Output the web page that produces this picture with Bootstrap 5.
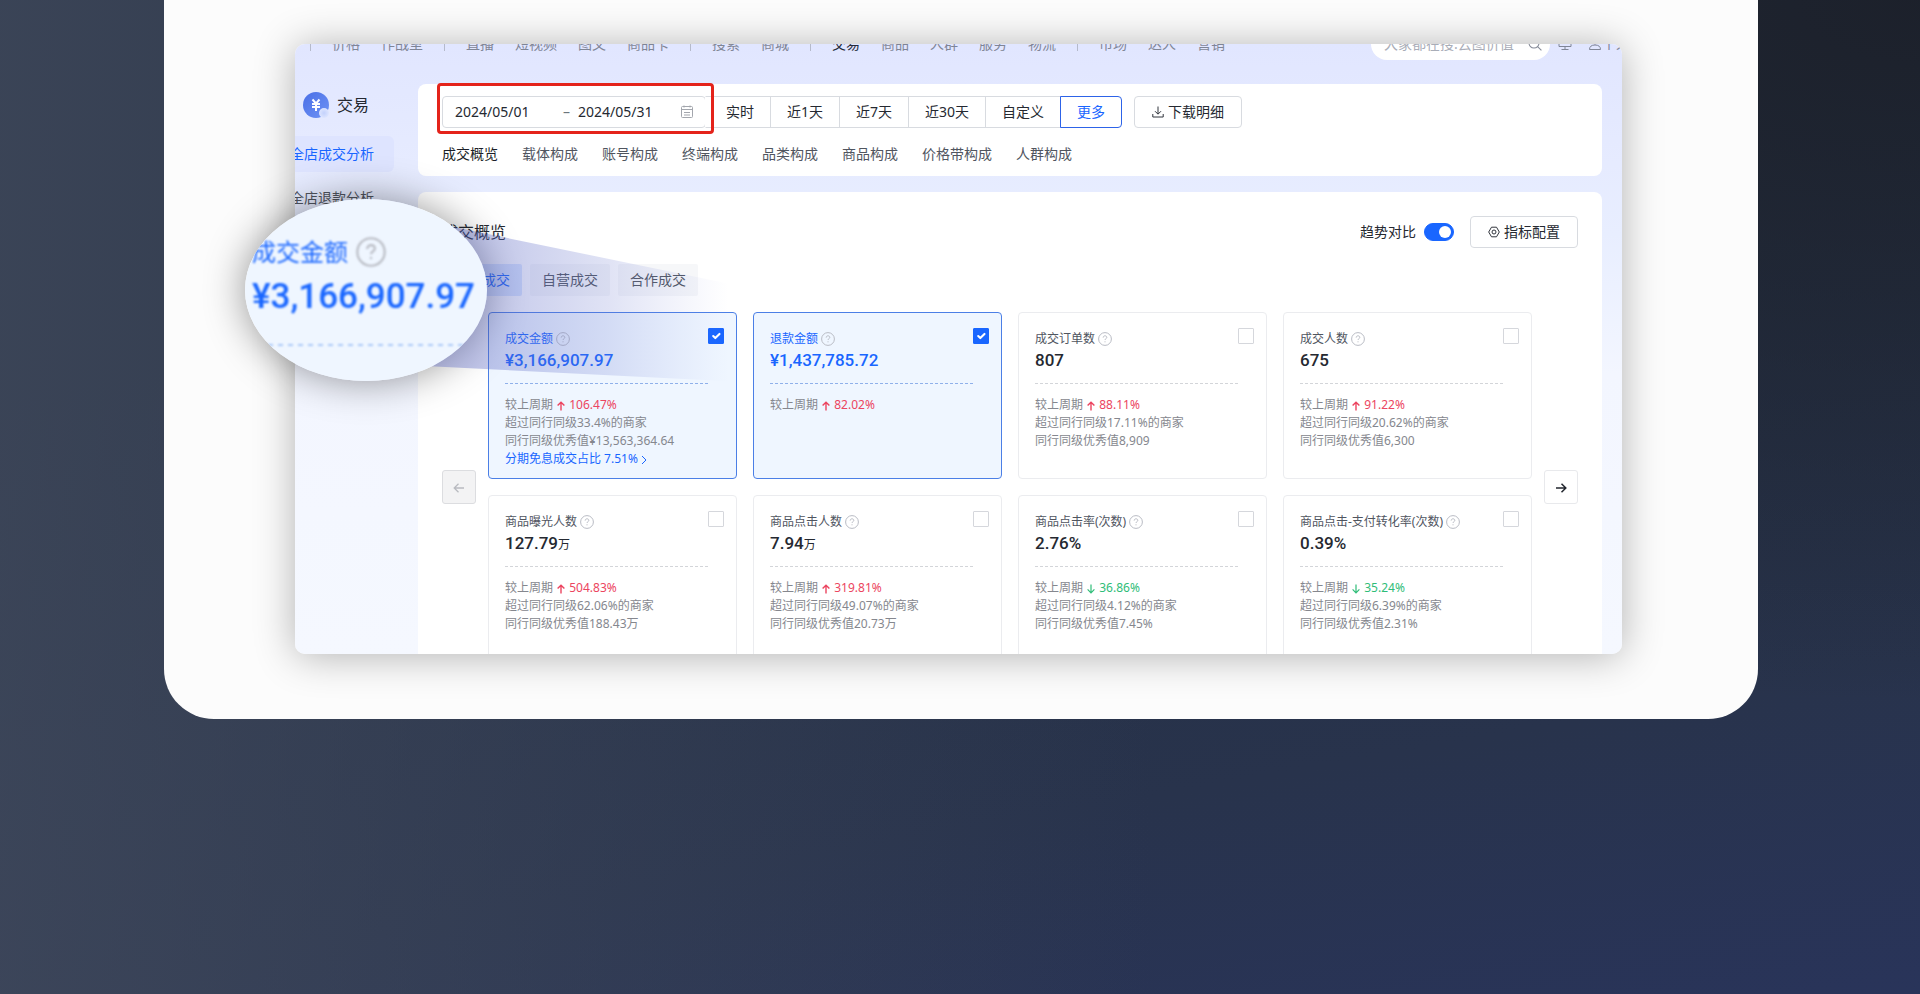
<!DOCTYPE html>
<html lang="zh-CN">
<head>
<meta charset="utf-8">
<meta name="viewport" content="width=device-width, initial-scale=1">
<title>交易 - 成交概览</title>
<link href="https://cdn.jsdelivr.net/npm/bootstrap@5.3.0/dist/css/bootstrap.min.css" rel="stylesheet">
<style>
  :root { --brand: #1966ff; --ink: #252931; --ink-2: #50555f; --ink-3: #85878e; }
  body {
    font: 14px/22px "Noto Sans", "Noto Sans CJK SC", sans-serif;
    color: var(--ink);
    min-height: 100vh;
    padding: 0 162px 0 164px;
    background:
      radial-gradient(ellipse at 100% 0, rgba(28,32,42,.95), rgba(28,32,42,0) 50%),
      linear-gradient(90deg, rgba(66,75,94,.75), rgba(66,75,94,0) 60%),
      linear-gradient(170deg, #232e40 30%, #28334c 75%, #29345a);
  }
  a { text-decoration: none; color: inherit; }
  .slide { background: #fcfcfc; border-radius: 0 0 50px 50px; padding: 44px 136px 65px 131px; }
  .screen {
    border-radius: 10px; overflow: hidden;
    background: linear-gradient(180deg, #e1e6ff 0, #e6ebff 120px, #e8eeff 190px, #f3f6ff 330px, #f5f8ff);
    box-shadow: 0 2px 40px rgba(0,0,0,.3);
  }
  .topnav { height: 32px; margin-top: -16px; padding-left: 15px; gap: 21px; color: #7f8596; }
  .topnav a { white-space: nowrap; }
  .topnav .sep { width: 1px; height: 14px; background: #b5bacb; }
  .topnav .current { color: #252b3a; }
  .search { width: 179px; height: 32px; background: #fff; padding: 0 8px 0 13px; }
  .search input { width: 140px; font-size: 14px; color: #a9adb8; }
  .search input::placeholder { color: #a9adb8; opacity: 1; }
  .account { margin-right: -8px; }
  .side { width: 123px; padding-top: 8px; }
  .side h1 { font-size: 16px; line-height: 24px; margin: 0; font-weight: 400; }
  .side-links { margin: 18px 24px 0 -5px; gap: 8px; }
  .side-links a { height: 36px; line-height: 36px; white-space: nowrap; color: var(--ink-2); border-radius: 6px; }
  .side-links a.on { color: var(--brand); background: #dee4ff; }
  .content { min-width: 0; }
  .panel { background: #fff; border-radius: 8px; }
  .filters { padding: 12px 24px 11px; }
  .ctl { height: 32px; border: 1px solid #d8dbe0; background: #fff; color: var(--ink); padding: 0; font-size: 14px; line-height: 20px; border-radius: 4px; white-space: nowrap; }
  .action { min-width: 108px; padding: 0 16px; }
  .download { margin-left: 12px; }
  .date { width: 264px; padding: 0 11px 0 12px; position: relative; }
  .date input { width: 78px; color: var(--ink); font: inherit; }
  .marker { position: absolute; inset: -14px -9px -7px -6px; border: 3px solid #e4231b; border-radius: 4px; pointer-events: none; z-index: 2; }
  .seg .ctl { padding: 0 16px; border-radius: 0; margin-left: -1px; }
  .seg .ctl:first-child { padding-left: 20px; border-left-color: transparent; }
  .seg .ctl.on { color: var(--brand); border-color: #2d63e8; border-radius: 0 4px 4px 0; z-index: 1; }
  .tabs { gap: 24px; margin-top: 15px; color: var(--ink-2); }
  .tabs a { white-space: nowrap; }
  .tabs .on { color: #1b1f28; }
  .overview { padding: 24px 24px 0; margin: 16px 0 -8px; border-radius: 8px 8px 0 0; }
  .overview h2 { font-size: 16px; line-height: 24px; margin: 0; font-weight: 400; }
  .form-switch { min-height: 0; }
  .form-switch .form-check-input { width: 30px; height: 18px; margin: 0; }
  .form-check-input:checked { background-color: var(--brand); border-color: var(--brand); }
  .kind { width: 80px; height: 32px; border: 0; padding: 0; font-size: 14px; line-height: 20px; border-radius: 2px; background: #f6f7f9; color: var(--ink-2); }
  .kind.on { background: #dce8ff; color: var(--brand); }
  .pager { gap: 12px; }
  .arrow { width: 34px; height: 34px; flex: none; border: 1px solid #e8e9ec; background: #fff; border-radius: 3px; padding: 0; color: #22262e; }
  .arrow:disabled { background: #f3f3f4; border-color: #dcdde0; color: #b9bbc0; }
  .metrics { display: grid; grid-template-columns: repeat(4, minmax(0, 1fr)); grid-auto-rows: 167px; gap: 16px; }
  .metric { border: 1px solid #ebecef; border-radius: 4px; padding: 17px 12px 0 16px; font-size: 12px; line-height: 18px; color: var(--ink-3); white-space: nowrap; }
  .metric.on { background: #eff6ff; border-color: #4b7fe6; }
  .metric label { color: var(--ink-2); line-height: 18px; }
  .metric .q { width: 14px; height: 14px; margin: 2px 0 0 3px; }
  .metric .num { font: 500 17px/24px Roboto, "Noto Sans CJK SC", sans-serif; height: 24px; color: var(--ink); }
  .metric .num small { font-size: 12px; font-weight: 400; line-height: 20px; }
  .metric.on label, .metric.on .num, .more { color: var(--brand); }
  .metric .form-check-input { width: 16px; height: 16px; margin: -2px 0 0; border-radius: 1px; border-color: #d5d7dc; }
  .metric .form-check-input:checked { border-color: var(--brand); }
  .rule { border-top: 1px dashed #d3d5d9; margin: 11px 16px 12px 0; }
  .metric.on .rule { border-color: #8fb0ea; }
  .up { color: #ec4560; } .down { color: #2fbd78; }
  .beam { position: absolute; left: 110px; top: 170px; width: 340px; height: 170px; pointer-events: none; }
  .lens, .lens-shade { position: absolute; left: -50px; top: 155px; width: 242px; height: 182px; border-radius: 50%; }
  .lens { overflow: hidden; background: #eff6ff; padding: 38px 0 0 7px; color: var(--brand); }
  .lens-shade { box-shadow: 0 0 40px rgba(0,0,0,.42); }
  .lens-body { filter: blur(1px); white-space: nowrap; }
  .lens-name { font-size: 24px; line-height: 30px; }
  .lens-num { font: 500 35px/44px Roboto, sans-serif; margin-top: 8px; }
</style>
</head>
<body>
<svg class="d-none" aria-hidden="true">
  <symbol id="q" viewBox="0 0 14 14"><circle cx="7" cy="7" r="6.4" fill="none" stroke="#b9bcc4"/><path d="M5.2 5.6c0-1.1.8-1.8 1.8-1.8s1.8.6 1.8 1.6c0 1.3-1.8 1.3-1.8 2.6M7 9.3v1" fill="none" stroke="#b9bcc4"/></symbol>
  <symbol id="up" viewBox="0 0 10 10"><path d="M5 9.4V1.200M1.600 4.600L5 1.200l3.400 3.400" fill="none" stroke="currentColor" stroke-width="1.400"/></symbol>
  <symbol id="down" viewBox="0 0 10 10"><path d="M5 .6v8.200M1.600 5.400L5 8.800l3.400-3.400" fill="none" stroke="currentColor" stroke-width="1.200"/></symbol>
</svg>

<main class="slide">
  <div class="position-relative">
    <div class="screen">
      <nav class="topnav d-flex align-items-center">
        <span class="sep"></span><a href="#">价格</a><a href="#">作战室</a>
        <span class="sep"></span><a href="#">直播</a><a href="#">短视频</a><a href="#">图文</a><a href="#">商品卡</a>
        <span class="sep"></span><a href="#">搜索</a><a href="#">商城</a>
        <span class="sep"></span><a href="#" class="current">交易</a><a href="#">商品</a><a href="#">人群</a><a href="#">服务</a><a href="#">物流</a>
        <span class="sep"></span><a href="#">市场</a><a href="#">达人</a><a href="#">营销</a>
        <div class="d-flex align-items-center ms-auto">
          <div class="search d-flex align-items-center justify-content-between rounded-pill">
            <input type="text" class="border-0 bg-transparent p-0" placeholder="大家都在搜:云图价值" aria-label="搜索">
            <svg width="14" height="14" viewBox="0 0 14 14" fill="none" stroke="#858a98" stroke-width="1.1"><circle cx="6" cy="6" r="5"/><path d="M9.6 9.6l3.8 3.8"/></svg>
          </div>
          <svg class="ms-2" width="14" height="14" viewBox="0 0 14 14" fill="none" stroke="#7f8596"><path d="M1 1.5h12v8H1zM7 9.5v3M3.5 12.5h7"/></svg>
          <svg class="ms-3" width="14" height="14" viewBox="0 0 14 14" fill="none" stroke="#7f8596"><circle cx="7" cy="4" r="3"/><path d="M1.500 12.500c0-3 2-4.500 5.500-4.500s5.500 1.500 5.500 4.500z"/></svg>
          <a href="#" class="account">个人</a>
        </div>
      </nav>

      <div class="d-flex">
        <aside class="side flex-shrink-0 mt-4">
          <div class="d-flex align-items-center gap-2 ps-2">
            <svg width="26" height="26" viewBox="0 0 26 26">
              <defs>
                <linearGradient id="coin" x1="0" y1="0" x2="1" y2="1"><stop offset="0" stop-color="#4a6fe6"/><stop offset="1" stop-color="#6f93f5"/></linearGradient>
                <radialGradient id="glint"><stop offset="0" stop-color="#c3d1fc"/><stop offset="1" stop-color="#dde5ff"/></radialGradient>
              </defs>
              <circle cx="13" cy="13" r="13" fill="url(#coin)"/><circle cx="21" cy="21" r="5" fill="url(#glint)"/>
              <path d="M9.500 7.500l3.500 4 3.500-4M9 12h8M9 15h8M13 11v8" fill="none" stroke="#fff" stroke-width="2"/>
            </svg>
            <h1>交易</h1>
          </div>
          <nav class="side-links d-flex flex-column">
            <a href="#" class="on">全店成交分析</a>
            <a href="#">全店退款分析</a>
          </nav>
        </aside>

        <div class="content flex-grow-1 mt-4 pe-3">
          <section class="panel filters me-1">
            <div class="d-flex">
              <div class="ctl date d-flex align-items-center">
                <input type="text" class="border-0 p-0" value="2024/05/01" aria-label="开始日期">
                <span class="flex-grow-1 text-end text-secondary pe-2">–</span>
                <input type="text" class="border-0 p-0" value="2024/05/31" aria-label="结束日期">
                <svg class="ms-4" width="14" height="14" viewBox="0 0 14 14" fill="none" stroke="#a3a6ad"><rect x="1.500" y="1.500" width="11" height="11" rx="1"/><path d="M1.500 4.500h11M4 .5v2M10 .5v2M4 7.500h6M4 10h6"/></svg>
                <span class="marker"></span>
              </div>
              <div class="btn-group seg">
                <button type="button" class="btn ctl">实时</button><button type="button" class="btn ctl">近1天</button><button type="button" class="btn ctl">近7天</button><button type="button" class="btn ctl">近30天</button><button type="button" class="btn ctl">自定义</button><button type="button" class="btn ctl on">更多</button>
              </div>
              <button type="button" class="btn ctl action download d-flex align-items-center justify-content-center gap-1">
                <svg width="12" height="12" viewBox="0 0 12 12" fill="none" stroke="#30343c"><path d="M6 .5v7.500M3 5.200L6 8.200l3-3M.8 8v3h10.400V8"/></svg>下载明细
              </button>
            </div>
            <nav class="tabs d-flex">
              <a href="#" class="on">成交概览</a><a href="#">载体构成</a><a href="#">账号构成</a><a href="#">终端构成</a><a href="#">品类构成</a><a href="#">商品构成</a><a href="#">价格带构成</a><a href="#">人群构成</a>
            </nav>
          </section>

          <section class="panel overview me-1">
            <div class="d-flex align-items-center">
              <h2 class="flex-grow-1">成交概览</h2>
              <label for="trend" class="me-2">趋势对比</label>
              <div class="form-check form-switch p-0 m-0 d-flex me-3"><input class="form-check-input" type="checkbox" role="switch" id="trend" checked></div>
              <button type="button" class="btn ctl action d-flex align-items-center justify-content-center gap-1">
                <svg width="12" height="12" viewBox="0 0 12 12" fill="none" stroke="#30343c"><path d="M3.500 1.200h5L11.300 6 8.500 10.800h-5L.7 6z" stroke-linejoin="round"/><circle cx="6" cy="6" r="2"/></svg>指标配置
              </button>
            </div>
            <div class="d-flex gap-2 mt-3">
              <button type="button" class="kind on">全部成交</button><button type="button" class="kind">自营成交</button><button type="button" class="kind">合作成交</button>
            </div>
            <div class="pager d-flex align-items-center mt-3">
              <button type="button" class="arrow" disabled aria-label="上一页"><svg width="12" height="12" viewBox="0 0 12 12" fill="none" stroke="currentColor" stroke-width="1.300"><path d="M11 6H1.200M5.500 1.800L1.200 6l4.300 4.200"/></svg></button>
              <div class="metrics flex-grow-1" id="metrics"></div>
              <button type="button" class="arrow" aria-label="下一页"><svg width="12" height="12" viewBox="0 0 12 12" fill="none" stroke="currentColor" stroke-width="1.500"><path d="M1 6h9.800M6.500 1.800L10.800 6l-4.300 4.200"/></svg></button>
            </div>
          </section>
        </div>
      </div>
    </div>

    <div class="lens-shade"></div>
    <svg class="beam" viewBox="0 0 340 170" preserveAspectRatio="none" aria-hidden="true">
      <defs><linearGradient id="ray"><stop offset=".2" stop-color="#5a66c4" stop-opacity=".38"/><stop offset=".6" stop-color="#6472cc" stop-opacity=".2"/><stop offset=".95" stop-color="#7a88e0" stop-opacity="0"/></linearGradient></defs>
      <path d="M0 3L340 73V168L0 151z" fill="url(#ray)"/>
    </svg>
    <div class="lens">
      <div class="lens-body">
        <div class="lens-name d-flex align-items-center">成交金额<svg class="ms-2" width="30" height="30"><use href="#q"/></svg></div>
        <div class="lens-num">¥3,166,907.97</div>
        <svg class="d-block mt-4 ms-3" width="200" height="4"><path d="M0 2h200" stroke="#a9c8f8" stroke-width="2" stroke-dasharray="5 5"/></svg>
      </div>
    </div>
  </div>
</main>

<script>
  const rows = [
    { n: '成交金额', v: '¥3,166,907.97', p: '106.47%', l: ['超过同行同级33.4%的商家', '同行同级优秀值¥13,563,364.64'], more: '分期免息成交占比 7.51%', on: true },
    { n: '退款金额', v: '¥1,437,785.72', p: '82.02%', l: [], on: true },
    { n: '成交订单数', v: '807', p: '88.11%', l: ['超过同行同级17.11%的商家', '同行同级优秀值8,909'] },
    { n: '成交人数', v: '675', p: '91.22%', l: ['超过同行同级20.62%的商家', '同行同级优秀值6,300'] },
    { n: '商品曝光人数', v: '127.79', u: '万', p: '504.83%', l: ['超过同行同级62.06%的商家', '同行同级优秀值188.43万'] },
    { n: '商品点击人数', v: '7.94', u: '万', p: '319.81%', l: ['超过同行同级49.07%的商家', '同行同级优秀值20.73万'] },
    { n: '商品点击率(次数)', v: '2.76%', p: '36.86%', down: true, l: ['超过同行同级4.12%的商家', '同行同级优秀值7.45%'] },
    { n: '商品点击-支付转化率(次数)', v: '0.39%', p: '35.24%', down: true, l: ['超过同行同级6.39%的商家', '同行同级优秀值2.31%'] }
  ];
  document.getElementById('metrics').innerHTML = rows.map((r, i) => {
    const d = r.down ? 'down' : 'up';
    return `<article class="metric ${r.on ? 'on' : ''}">
      <div class="d-flex align-items-start">
        <label for="m${i}">${r.n}</label><svg class="q"><use href="#q"/></svg>
        <input class="form-check-input ms-auto" type="checkbox" id="m${i}" ${r.on ? 'checked' : ''}>
      </div>
      <div class="num">${r.v}${r.u ? `<small>${r.u}</small>` : ''}</div>
      <div class="rule"></div>
      <div>较上周期 <span class="${d}"><svg width="10" height="10"><use href="#${d}"/></svg> ${r.p}</span></div>
      ${r.l.map(t => `<div>${t}</div>`).join('')}
      ${r.more ? `<a href="#" class="more d-block">${r.more} <svg width="6" height="10" viewBox="0 0 6 10" fill="none" stroke="currentColor"><path d="M1 1l4 4-4 4"/></svg></a>` : ''}
    </article>`;
  }).join('');
</script>
<script src="https://cdn.jsdelivr.net/npm/bootstrap@5.3.0/dist/js/bootstrap.bundle.min.js"></script>
</body>
</html>
